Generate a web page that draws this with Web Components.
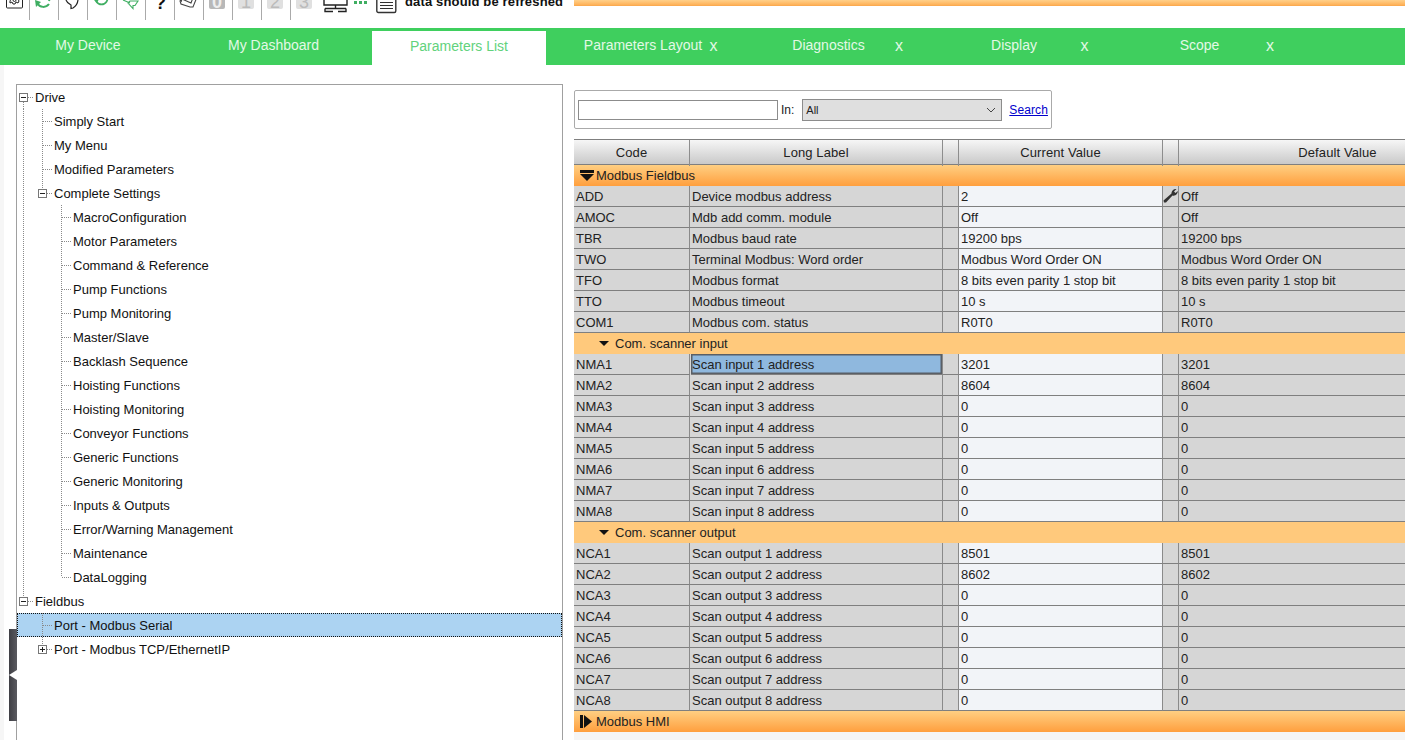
<!DOCTYPE html>
<html>
<head>
<meta charset="utf-8">
<title>Parameters List</title>
<style>
  html, body { margin: 0; height: 740px; overflow: hidden; background: #fff; }
  body { font-family: "Liberation Sans", Arial, sans-serif; position: relative; }
  .main { display: flex; height: 675px; overflow: hidden; padding: 19px 0 0 16px; box-sizing: border-box; background: linear-gradient(90deg, #f6f6f6 4px, #fff 4px); }
  .right { margin-left: 11px; flex: 1; min-width: 0; overflow: hidden; padding-top: 6px; }
</style>
</head>
<body>

<app-toolbar>
  <tool-btn><svg viewBox="1 0 28 20" width="28" height="20" fill="none" stroke="#222"><rect x="6.500" y="-8" width="16" height="16" rx="1"/><path d="M10 3l2-1 1 2 2 0 1-2 2 1 1-2-1-2 1-2-2-2-1 1h-3l-1-1-2 2 1 2-1 2z"/><circle cx="14.500" cy="0" r="1.500"/></svg></tool-btn>
  <tool-btn><svg viewBox="1 0 28 20" width="28" height="20" fill="none" stroke="#3fae62" stroke-width="2"><path d="M8 3c3 5 9 5 12 1"/><path d="M6 0l6 2-5 5z" fill="#3fae62" stroke="none"/><path d="M20 1c1-3 0-6-2-8"/></svg></tool-btn>
  <tool-btn><svg viewBox="1 0 28 20" width="28" height="20" fill="none" stroke="#222" stroke-width="1.200"><path d="M8 0c1 3 3 4 5 5l0 3.500 2-.5c3-2 5-5 5-9"/></svg></tool-btn>
  <tool-btn><svg viewBox="1 0 28 20" width="28" height="20" fill="none" stroke="#3fae62" stroke-width="1.700"><path d="M9 -4a6 6 0 1 0 11 0"/><path d="M7 0l5 -1-2 4z" fill="#3fae62" stroke="none"/></svg></tool-btn>
  <tool-btn><svg viewBox="1 0 28 20" width="28" height="20" fill="none" stroke="#3fae62" stroke-width="1.100"><path d="M7 0l7 3"/><path d="M22 1h-8l-2 2 5 5.500v-3h2l3-4.500z"/></svg></tool-btn>
  <tool-btn><svg viewBox="1 0 28 20" width="28" height="20"><text x="10" y="9" font-family="Liberation Sans" font-weight="700" font-size="18" fill="#111">?</text></svg></tool-btn>
  <tool-btn><svg viewBox="1 0 28 20" width="28" height="20" fill="none" stroke="#444" stroke-width="1.100"><path d="M6 1l2-2 9 4 3-8 3 2-4 10-3 0-9-3z"/><path d="M8 -1l-1 3"/></svg></tool-btn>
  <tool-btn><svg viewBox="1 0 28 20" width="28" height="20"><rect x="6" y="-8" width="16" height="17" rx="2" fill="#b8b8b8"/><text x="14" y="8" text-anchor="middle" font-family="Liberation Sans" font-weight="700" font-size="18" fill="#eee">0</text></svg></tool-btn>
  <tool-btn><svg viewBox="1 0 28 20" width="28" height="20"><rect x="6" y="-8" width="16" height="17" rx="2" fill="#e0e0e0"/><text x="14" y="8" text-anchor="middle" font-family="Liberation Sans" font-size="18" fill="#bbb">1</text></svg></tool-btn>
  <tool-btn><svg viewBox="1 0 28 20" width="28" height="20"><rect x="6" y="-8" width="16" height="17" rx="2" fill="#e0e0e0"/><text x="14" y="8" text-anchor="middle" font-family="Liberation Sans" font-size="18" fill="#bbb">2</text></svg></tool-btn>
  <tool-btn last><svg viewBox="1 0 28 20" width="28" height="20"><rect x="6" y="-8" width="16" height="17" rx="2" fill="#e0e0e0"/><text x="14" y="8" text-anchor="middle" font-family="Liberation Sans" font-size="18" fill="#bbb">3</text></svg></tool-btn>
</app-toolbar>

<app-tabs>
  <app-tab>My Device</app-tab>
  <app-tab>My Dashboard</app-tab>
  <app-tab active>Parameters List</app-tab>
  <app-tab closable>Parameters Layout</app-tab>
  <app-tab closable>Diagnostics</app-tab>
  <app-tab closable>Display</app-tab>
  <app-tab closable>Scope</app-tab>
</app-tabs>

<div class="main">
  <param-tree>
    <tree-node guides="mb">Drive</tree-node>
    <tree-node guides="i t">Simply Start</tree-node>
    <tree-node guides="i t">My Menu</tree-node>
    <tree-node guides="i t">Modified Parameters</tree-node>
    <tree-node guides="i mt">Complete Settings</tree-node>
    <tree-node guides="i _ t">MacroConfiguration</tree-node>
    <tree-node guides="i _ t">Motor Parameters</tree-node>
    <tree-node guides="i _ t">Command &amp; Reference</tree-node>
    <tree-node guides="i _ t">Pump Functions</tree-node>
    <tree-node guides="i _ t">Pump Monitoring</tree-node>
    <tree-node guides="i _ t">Master/Slave</tree-node>
    <tree-node guides="i _ t">Backlash Sequence</tree-node>
    <tree-node guides="i _ t">Hoisting Functions</tree-node>
    <tree-node guides="i _ t">Hoisting Monitoring</tree-node>
    <tree-node guides="i _ t">Conveyor Functions</tree-node>
    <tree-node guides="i _ t">Generic Functions</tree-node>
    <tree-node guides="i _ t">Generic Monitoring</tree-node>
    <tree-node guides="i _ t">Inputs &amp; Outputs</tree-node>
    <tree-node guides="i _ t">Error/Warning Management</tree-node>
    <tree-node guides="i _ t">Maintenance</tree-node>
    <tree-node guides="i _ l">DataLogging</tree-node>
    <tree-node guides="mt">Fieldbus</tree-node>
    <tree-node guides="_ t" selected>Port - Modbus Serial</tree-node>
    <tree-node guides="_ pt">Port - Modbus TCP/EthernetIP</tree-node>
  </param-tree>

  <div class="right">
    <search-bar></search-bar>
    <param-table>
      <param-group icon="open">Modbus Fieldbus</param-group>
      <param-row code="ADD" value="2" def="Off" wrench>Device modbus address</param-row>
      <param-row code="AMOC" value="Off" def="Off">Mdb add comm. module</param-row>
      <param-row code="TBR" value="19200 bps" def="19200 bps">Modbus baud rate</param-row>
      <param-row code="TWO" value="Modbus Word Order ON" def="Modbus Word Order ON">Terminal Modbus: Word order</param-row>
      <param-row code="TFO" value="8 bits even parity 1 stop bit" def="8 bits even parity 1 stop bit">Modbus format</param-row>
      <param-row code="TTO" value="10 s" def="10 s">Modbus timeout</param-row>
      <param-row code="COM1" value="R0T0" def="R0T0">Modbus com. status</param-row>
      <param-group icon="sub">Com. scanner input</param-group>
      <param-row code="NMA1" value="3201" def="3201" selected>Scan input 1 address</param-row>
      <param-row code="NMA2" value="8604" def="8604">Scan input 2 address</param-row>
      <param-row code="NMA3" value="0" def="0">Scan input 3 address</param-row>
      <param-row code="NMA4" value="0" def="0">Scan input 4 address</param-row>
      <param-row code="NMA5" value="0" def="0">Scan input 5 address</param-row>
      <param-row code="NMA6" value="0" def="0">Scan input 6 address</param-row>
      <param-row code="NMA7" value="0" def="0">Scan input 7 address</param-row>
      <param-row code="NMA8" value="0" def="0">Scan input 8 address</param-row>
      <param-group icon="sub">Com. scanner output</param-group>
      <param-row code="NCA1" value="8501" def="8501">Scan output 1 address</param-row>
      <param-row code="NCA2" value="8602" def="8602">Scan output 2 address</param-row>
      <param-row code="NCA3" value="0" def="0">Scan output 3 address</param-row>
      <param-row code="NCA4" value="0" def="0">Scan output 4 address</param-row>
      <param-row code="NCA5" value="0" def="0">Scan output 5 address</param-row>
      <param-row code="NCA6" value="0" def="0">Scan output 6 address</param-row>
      <param-row code="NCA7" value="0" def="0">Scan output 7 address</param-row>
      <param-row code="NCA8" value="0" def="0">Scan output 8 address</param-row>
      <param-group icon="closed">Modbus HMI</param-group>
    </param-table>
  </div>
</div>

<side-handle></side-handle>

<script>
// small helper, every element is the same shape: set the shadow html once
class Base extends HTMLElement {
  constructor() {
    super();
    this.attachShadow({ mode: 'open' });
  }
}

class AppToolbar extends Base {
  connectedCallback() {
    this.shadowRoot.innerHTML = `
      <style>
        :host { display: flex; height: 28px; overflow: hidden; padding-left: 1px; box-sizing: border-box; align-items: flex-start; }
        .txt { margin-left: 8px; font: bold 13px "Liberation Sans", Arial, sans-serif; letter-spacing: .15px; color: #111; line-height: 14px; margin-top: -5px; white-space: nowrap; width: 169px; }
        .bar { flex: 1; height: 6px; background: linear-gradient(#ffd08a, #ffb65f 70%, #f9a64a); }
      </style>
      <slot></slot>
      <svg width="26" height="14" viewBox="0 0 26 14" fill="none" stroke="#222" stroke-width="1.400" style="margin-left:3px">
        <path d="M1 -2V5H24V-2M12.500 5V8M2 8.500H23M2 8.500V11.500H10M23 8.500V11.500H15"/>
      </svg>
      <svg width="14" height="4" viewBox="0 0 14 4" style="margin-left:5px;margin-top:1px" fill="#3fae62">
        <rect x="0" width="3" height="3"/><rect x="5" width="3" height="3"/><rect x="10" width="3" height="3"/>
      </svg>
      <svg width="21" height="14" viewBox="0 0 21 14" fill="none" stroke="#333" style="margin-left:8px">
        <rect x=".8" y="-4" width="19" height="16.500" rx="1.500" stroke-width="1.400"/>
        <path d="M4 2.500H17M4 5.500H17M4 8.500H17" stroke-width="1.200"/>
      </svg>
      <div class="txt">data should be refreshed</div>
      <div class="bar"></div>
    `;
  }
}
customElements.define('app-toolbar', AppToolbar);

class ToolBtn extends Base {
  connectedCallback() {
    const last = this.hasAttribute('last');
    this.shadowRoot.innerHTML = `
      <style>
        :host { display: block; width: 29px; height: 20px; box-sizing: border-box; overflow: hidden; ${last ? '' : 'border-right: 1px solid #aaa;'} }
        ::slotted(svg) { display: block; }
      </style>
      <slot></slot>
    `;
  }
}
customElements.define('tool-btn', ToolBtn);

class AppTabs extends Base {
  connectedCallback() {
    this.shadowRoot.innerHTML = `
      <style>
        :host { display: flex; height: 37px; background: #3fcf5e; padding-left: 1px; gap: 11.500px; box-sizing: border-box; overflow: hidden; }
      </style>
      <slot></slot>
    `;
  }
}
customElements.define('app-tabs', AppTabs);

class AppTab extends Base {
  connectedCallback() {
    const active = this.hasAttribute('active');
    const closable = this.hasAttribute('closable');
    this.shadowRoot.innerHTML = `
      <style>
        :host { display: grid; grid-template-columns: 1fr auto 1fr; width: 174px; flex: none; box-sizing: border-box; align-items: center;
          font: 14px "Liberation Sans", Arial, sans-serif; color: ${active ? '#62d27c' : '#e3f9e6'}; background: ${active ? '#fff' : 'transparent'}; margin-top: ${active ? 3 : 0}px; height: ${active ? 34 : 37}px; padding-bottom: ${active ? 4 : 3}px; }
        .t { grid-column: 2; white-space: nowrap; ${closable ? 'margin-right: 3px;' : ''} }
        .x { grid-column: 3; justify-self: end; margin-right: 14px; font-size: 16px; margin-top: 1px; }
      </style>
      <span class="t"><slot></slot></span>
      ${closable ? '<span class="x">x</span>' : ''}
    `;
  }
}
customElements.define('app-tab', AppTab);

class ParamTree extends Base {
  connectedCallback() {
    this.shadowRoot.innerHTML = `
      <style>
        :host { display: block; width: 547px; height: 700px; flex: none; border: 1px solid #a0a0a0; box-sizing: border-box; background: #fff; }
      </style>
      <slot></slot>
    `;
  }
}
customElements.define('param-tree', ParamTree);

// one 19x24 cell of the tree connectors
function guideCell(tok) {
  const c = '#8a8a8a';
  const dash = `stroke="${c}" stroke-dasharray="1 1" shape-rendering="crispEdges"`;
  let s = '';
  if (tok === 'i' || tok === 't') s += `<path d="M7.500 0V24" ${dash}/>`;
  if (tok === 'l') s += `<path d="M7.500 0V12" ${dash}/>`;
  if (tok === 't' || tok === 'l') s += `<path d="M8 12.500H18" ${dash}/>`;
  if (tok === 'mb' || tok === 'mt' || tok === 'pt') {
    if (tok === 'mb') s += `<path d="M7.500 17V24" ${dash}/>`;
    else s += `<path d="M7.500 0V8" ${dash}/>`;
    s += `<path d="M12 12.500H18" ${dash}/>`;
    s += `<rect x="3.500" y="8.500" width="8" height="8" fill="#fff" stroke="#777" shape-rendering="crispEdges"/>`;
    s += `<path d="M5 12.500H10" stroke="#222" shape-rendering="crispEdges"/>`;
    if (tok === 'pt') s += `<path d="M7.500 10V15" stroke="#222" shape-rendering="crispEdges"/>`;
  }
  return `<svg width="19" height="24" viewBox="0 0 19 24" fill="none" style="flex:none;display:block">${s}</svg>`;
}

class TreeNode extends Base {
  connectedCallback() {
    const toks = (this.getAttribute('guides') || '').split(' ');
    const sel = this.hasAttribute('selected');
    this.shadowRoot.innerHTML = `
      <style>
        :host { display: block; height: 24px; box-sizing: border-box; }
        .row { display: flex; align-items: center; height: 24px; box-sizing: border-box; font: 13px "Liberation Sans", Arial, sans-serif; color: #111; white-space: nowrap;
          ${sel ? 'background: #acd3f2; outline: 1px dotted #111; outline-offset: -1px;' : ''} }
        .g { display: flex; margin-left: -1px; }
      </style>
      <div class="row"><div class="g">${toks.map(guideCell).join('')}</div><span><slot></slot></span></div>
    `;
  }
}
customElements.define('tree-node', TreeNode);

class SearchBar extends Base {
  connectedCallback() {
    this.shadowRoot.innerHTML = `
      <style>
        :host { display: flex; align-items: center; width: 478px; height: 39px; border: 1px solid #aaa; border-radius: 2px; box-sizing: border-box; padding: 0 3px; font: 12px "Liberation Sans", Arial, sans-serif; color: #222; }
        input { width: 200px; height: 20px; box-sizing: border-box; border: 1px solid #8c8c8c; margin: 0; padding: 0; background: #fff; }
        .in { margin: 0 8px 0 3px; }
        .sel { display: flex; align-items: center; justify-content: space-between; width: 200px; height: 22px; box-sizing: border-box; border: 1px solid #8c8c8c; background: #dfdfdf; padding: 0 5px 0 3px; font-size: 11px; }
        a { margin-left: 7px; color: #0000cc; text-decoration: underline; letter-spacing: .1px; }
      </style>
      <input type="text">
      <span class="in">In:</span>
      <div class="sel"><span>All</span><svg width="10" height="6" viewBox="0 0 10 6" fill="none" stroke="#444"><path d="M1 1l4 4 4-4"/></svg></div>
      <a href="#">Search</a>
    `;
  }
}
customElements.define('search-bar', SearchBar);

const COLS = '116px 253px 16px 204px 16px 318px';

class ParamTable extends Base {
  connectedCallback() {
    this.shadowRoot.innerHTML = `
      <style>
        :host { display: block; margin-top: 10px; margin-left: -1px; width: 924px; box-sizing: border-box; border-left: 1px solid #7f7f7f; font: 13px "Liberation Sans", Arial, sans-serif; color: #222; background: #f5f5f5; height: 620px; }
        .head { display: grid; grid-template-columns: ${COLS}; height: 26px; box-sizing: border-box; border-top: 1px solid #7f7f7f; border-bottom: 1px solid #7f7f7f; background: linear-gradient(#f6f6f6, #c9c9c9); letter-spacing: .1px; }
        .head div { text-align: center; line-height: 26px; border-right: 1px solid #8d8d8d; box-sizing: border-box; }
      </style>
      <div class="head"><div>Code</div><div>Long Label</div><div></div><div>Current Value</div><div></div><div>Default Value</div></div>
      <slot></slot>
    `;
  }
}
customElements.define('param-table', ParamTable);

class ParamGroup extends Base {
  connectedCallback() {
    const kind = this.getAttribute('icon');
    const icons = {
      open: '<svg width="14" height="11" viewBox="0 0 14 11" fill="#111"><rect x="0" y="0" width="14" height="3"/><path d="M0 4H14L7 11z"/></svg>',
      sub: '<svg width="10" height="5" viewBox="0 0 10 5" fill="#111"><path d="M0 0H10L5 5z"/></svg>',
      closed: '<svg width="12" height="13" viewBox="0 0 12 13" fill="#111"><rect x="0" y="0" width="3" height="13"/><path d="M4 0L12 6.500L4 13z"/></svg>'
    };
    const sub = kind === 'sub';
    this.shadowRoot.innerHTML = `
      <style>
        :host { display: flex; align-items: center; height: 21px; box-sizing: border-box; padding-left: ${sub ? 25 : 6}px; gap: ${kind === 'open' ? 2 : kind === 'closed' ? 4 : 6}px;
          background: ${sub ? '#ffc97c' : 'linear-gradient(#ffcf82, #ff9f3e)'}; color: #222; }
        span { margin-top: -1px; }
        svg { display: block; }
      </style>
      ${icons[kind]}<span><slot></slot></span>
    `;
  }
}
customElements.define('param-group', ParamGroup);

class ParamRow extends Base {
  connectedCallback() {
    const sel = this.hasAttribute('selected');
    const wrench = this.hasAttribute('wrench') ? `<svg width="15" height="15" viewBox="0 0 15 15" style="display:block;margin-top:2px"><path d="M1 14.500L0.500 12.500L8.500 5.500C8.500 3 10.500 .5 13.500 1L11 3.500L12.500 5L14.800 3C15 6 12 8.500 9.500 7.500L3 14.500z" fill="#333"/></svg>` : '';
    this.shadowRoot.innerHTML = `
      <style>
        :host { display: grid; grid-template-columns: ${COLS}; height: 21px; box-sizing: border-box; background: #d6d6d6; }
        div { box-sizing: border-box; border-right: 1px solid #8a8a8a; border-bottom: 1px solid #7f7f7f; padding-left: 2px; line-height: 21px; white-space: nowrap; overflow: hidden; }
        .v { background: #f2f4f8; }
        .w { padding-left: 0; }
        .sel { background: #8fb8de; padding-left: 1px; margin-left: 1px; box-shadow: inset 0 0 0 1.500px #5a5f66; }
      </style>
      <div></div><div class="${sel ? 'sel' : ''}"><slot></slot></div><div class="w"></div><div class="v"></div><div class="w">${wrench}</div><div></div>
    `;
    const cells = this.shadowRoot.querySelectorAll('div');
    cells[0].textContent = this.getAttribute('code');
    cells[3].textContent = this.getAttribute('value');
    cells[5].textContent = this.getAttribute('def');
  }
}
customElements.define('param-row', ParamRow);

class SideHandle extends Base {
  connectedCallback() {
    this.shadowRoot.innerHTML = `
      <style>
        :host { display: block; position: absolute; left: 9px; top: 629px; width: 8px; height: 92px; background: linear-gradient(90deg, #3f3f44, #5a5a60); }
        svg { display: block; margin-top: 41px; }
      </style>
      <svg width="8" height="10" viewBox="0 0 8 10" fill="#fff"><path d="M8 0V10L0 5z"/></svg>
    `;
  }
}
customElements.define('side-handle', SideHandle);
</script>
</body>
</html>
